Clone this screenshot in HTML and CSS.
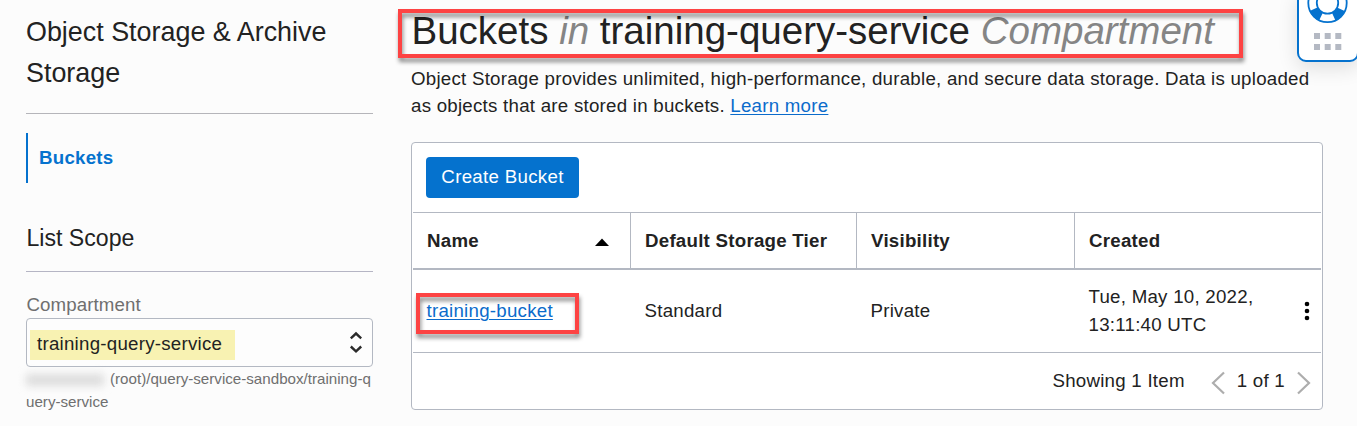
FILE: index.html
```html
<!DOCTYPE html>
<html lang="en">
<head>
<meta charset="utf-8">
<title>Object Storage - Buckets</title>
<link rel="stylesheet" href="styles.css">
</head>
<body>
<div class="layout">
  <aside class="sidebar">
    <h2 class="service-title"><span>Object Storage &amp; Archive</span><br><span>Storage</span></h2>
    <nav class="nav"><a class="nav-item">Buckets</a></nav>
    <h3 class="scope-title"><span>List Scope</span></h3>
    <label class="field-label"><span>Compartment</span></label>
    <div class="select">
      <span class="select-value"><span>training-query-service</span></span>
      <svg class="select-icon" width="14" height="24" viewBox="0 0 14 24"><path d="M1.800 7.300 7 2.500 12.200 7.300M1.800 15.500 7 20.300 12.200 15.500" fill="none" stroke="#2b2b2b" stroke-width="2.4"/></svg>
    </div>
    <p class="path"><span class="redacted"></span><span>(root)/query-service-sandbox/training-q</span><br><span>uery-service</span></p>
  </aside>
  <main class="main">
    <h1 class="page-title"><span>Buckets <em>in</em> training-query-service <em>Compartment</em></span></h1>
    <p class="intro"><span>Object Storage provides unlimited, high-performance, durable, and secure data storage. Data is uploaded</span><br><span>as objects that are stored in buckets. <a class="link">Learn more</a></span></p>
    <section class="panel">
      <div class="toolbar"><button class="button"><span>Create Bucket</span></button></div>
      <div class="row head">
        <div class="cell"><span>Name</span><svg class="sort" width="14" height="10" viewBox="0 0 14 10"><path d="M0 10 7 2.500 14 10Z" fill="#000"/></svg></div>
        <div class="cell"><span>Default Storage Tier</span></div>
        <div class="cell"><span>Visibility</span></div>
        <div class="cell"><span>Created</span></div>
      </div>
      <div class="row data">
        <div class="cell"><a class="link bucket">training-bucket</a></div>
        <div class="cell"><span>Standard</span></div>
        <div class="cell"><span>Private</span></div>
        <div class="cell"><span>Tue, May 10, 2022,<br>13:11:40 UTC</span>
          <svg class="kebab" width="6" height="20" viewBox="0 0 6 20"><circle cx="3" cy="3" r="2.3"/><circle cx="3" cy="10" r="2.3"/><circle cx="3" cy="17" r="2.3"/></svg></div>
      </div>
      <div class="footer">
        <span class="count">Showing 1 Item</span>
        <svg class="arrow" width="14" height="24" viewBox="0 0 14 24"><path d="M13 1.500 2 12 13 22.500" fill="none" stroke="#adadad" stroke-width="2.2"/></svg>
        <span class="pages">1 of 1</span>
        <svg class="arrow" width="14" height="24" viewBox="0 0 14 24"><path d="M1 1.500 12 12 1 22.500" fill="none" stroke="#adadad" stroke-width="2.2"/></svg>
      </div>
    </section>
  </main>
</div>
<div class="help">
  <svg width="58" height="60" viewBox="1299 0 58 60">
    <circle cx="1327.5" cy="3" r="15" fill="none" stroke="#0572ce" stroke-width="9" stroke-dasharray="10.500 13.062" stroke-dashoffset="-6.531"/>
    <circle cx="1327.5" cy="3" r="19.200" fill="none" stroke="#0572ce" stroke-width="1.800"/>
    <circle cx="1327.5" cy="3" r="10.700" fill="none" stroke="#0572ce" stroke-width="1.800"/>
    <path d="M1314 33h6v6h-6zM1324.700 33h6v6h-6zM1335.300 33h6v6h-6zM1314 44h6v6h-6zM1324.700 44h6v6h-6zM1335.300 44h6v6h-6z" fill="#b4b9c3"/>
  </svg>
</div>
<div class="mark mark-title"></div>
<div class="mark mark-bucket"></div>
</body>
</html>
```

FILE: styles.css
```css
* { box-sizing: border-box; }
body { margin: 0; height: 426px; overflow: hidden; background: #fcfcfc; color: #222; font-family: "Liberation Sans", Arial, sans-serif; font-size: 18.7px; letter-spacing: .25px; }
h1, h2, h3, p { margin: 0; font-weight: normal; white-space: nowrap; }
.layout { display: flex; gap: 38px; padding-left: 26px; }
.sidebar { width: 347px; }
.service-title { height: 114px; padding-top: 12px; border-bottom: 1px solid #b5b5ba; font-size: 26.900px; line-height: 41px; letter-spacing: 0; }
.nav { margin-top: 19px; }
.nav-item { display: block; height: 50px; border-left: 2px solid #0572ce; padding-left: 11px; line-height: 49px; font-weight: bold; color: #0572ce; }
.scope-title { height: 89px; padding: 35px 0 0 .5px; border-bottom: 1px solid #b5b5c4; font-size: 23.1px; line-height: 40px; letter-spacing: 0; }
.field-label { display: block; height: 46px; padding: 20px 0 0 .5px; line-height: 26px; letter-spacing: .1px; color: #6f6f6f; }
.select { display: flex; align-items: center; justify-content: space-between; height: 49px; border: 1px solid #b3b8c2; border-radius: 4px; padding: 4px 9px 0 3px; background: #fdfdfd; }
.select-value { width: 205px; height: 30px; padding-left: 7px; background: #f8f2b2; line-height: 28px; }
.select-icon { margin-bottom: 3px; }
.path { font-size: 15.15px; line-height: 23px; letter-spacing: 0; color: #6f6f6f; }
.redacted { display: inline-block; width: 78px; height: 12px; margin: 0 6px -2px 0; background: #dcdcdc; filter: blur(4px); }
.main { width: 912px; }
.page-title { height: 65px; padding: 9px 0 0 .5px; font-size: 38.5px; line-height: 44px; letter-spacing: 0; }
.page-title em { color: #858585; }
.intro { height: 77px; line-height: 27px; }
.link { color: #0b6bcb; text-decoration: underline; text-decoration-thickness: 1px; text-underline-offset: 2px; }
.panel { height: 268px; padding: 0 1px; background: #fff; border: 1px solid #b3b8c2; border-radius: 4px; }
.toolbar { height: 69px; padding: 14px 13px; }
.button { width: 153px; height: 41px; padding: 0 0 2px; border: 0; border-radius: 4px; background: #0572ce; color: #fff; font: inherit; letter-spacing: .3px; white-space: nowrap; }
.row { display: grid; grid-template-columns: 217px 226px 218px 1fr; }
.head { height: 58px; border-top: 1px solid #b3b8c2; border-bottom: 2px solid #b3b8c2; font-weight: bold; }
.cell { display: flex; align-items: center; justify-content: space-between; padding-left: 14px; line-height: 28px; }
.head .cell + .cell { border-left: 1px solid #b3b8c2; }
.head .cell { padding-right: 21px; }
.data { height: 83px; border-bottom: 1px solid #b3b8c2; }
.data .cell + .cell { padding-left: 14.5px; }
.bucket { margin-left: -.5px; }
.kebab { margin-right: 11px; }
.footer { display: flex; align-items: center; justify-content: flex-end; height: 56px; padding-right: 10px; }
.count { margin-right: 26px; }
.pages { margin: 0 12px; }
.arrow { margin-top: 4px; }
.help { position: absolute; left: 1297px; top: -10px; width: 62px; height: 72px; padding-top: 8px; overflow: visible; background: #fff; border: 2px solid #0572ce; border-radius: 9px; box-shadow: 0 6px 20px rgba(0,0,0,.12); }
.mark { position: absolute; border: 4px solid #fd4343; filter: drop-shadow(1px 4px 2px rgba(0,0,0,.45)); }
.mark-title { left: 398px; top: 9px; width: 845px; height: 49px; }
.mark-bucket { left: 416px; top: 293px; width: 163px; height: 41px; }
```
